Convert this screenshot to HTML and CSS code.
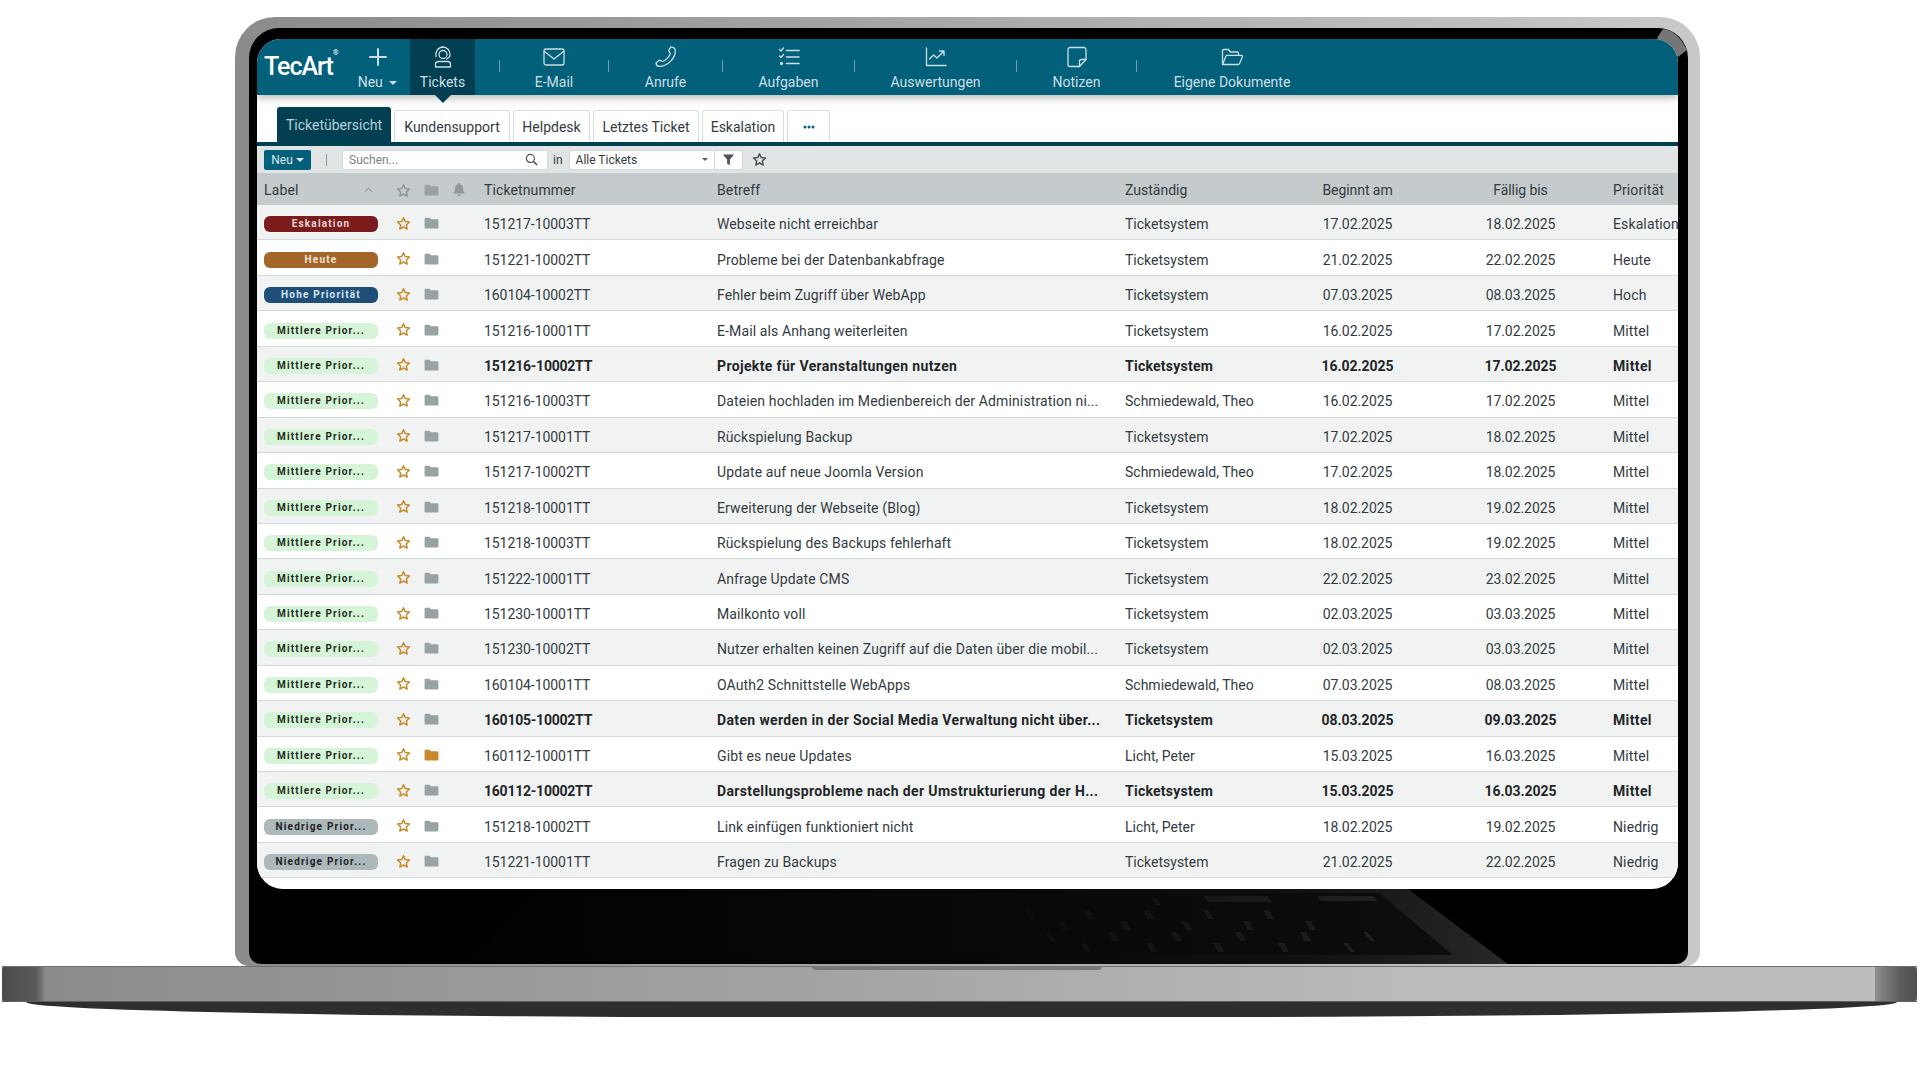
FILE: index.html
```html
<!DOCTYPE html>
<html lang="de">
<head>
  <meta charset="UTF-8">
  <title>TecArt Tickets</title>
  <link rel="stylesheet" href="styles.css">
</head>
<body>
  <!-- shared icons -->
  <svg class="defs" width="0" height="0">
    <symbol id="star" viewBox="0 0 24 24"><path d="M12 2.8l2.8 6.1 6.7.8-5 4.6 1.4 6.6-5.9-3.3-5.9 3.3 1.4-6.6-5-4.6 6.7-.8z" fill="none" stroke="currentColor" stroke-width="2.4" stroke-linejoin="round"/></symbol>
    <symbol id="folder" viewBox="0 0 16 13"><path d="M.5 2a1.2 1.2 0 0 1 1.2-1.2h4L7.500 2.500h6.800A1.200 1.200 0 0 1 15.500 3.700v7.600a1.200 1.200 0 0 1-1.200 1.200H1.700A1.200 1.200 0 0 1 .5 11.300z" fill="currentColor"/></symbol>
  </svg>

  <div class="lid">
    <div class="bezel">
      <svg class="hinge" width="40" height="32" viewBox="0 0 40 32"><path d="M15 1q14 1 24 21l-9 7-21-19z" fill="#767676"/></svg>

      <div class="screen">
        <!-- main navigation -->
        <nav class="nav">
          <div class="logo">TecArt<sup>®</sup></div>
          <div class="nav-item">
            <svg class="nav-icon" viewBox="0 0 22 22"><path d="M11 3v16M3 11h16" stroke-width="2"/></svg>
            <span>Neu <i class="caret"></i></span>
          </div>
          <div class="nav-item active">
            <svg class="nav-icon" viewBox="0 0 22 22"><circle cx="11" cy="8.500" r="4"/><path d="M4 10.500a7.500 7.500 0 0 1 7-9.500 7.200 7.200 0 0 1 7 7.500c0 1.200-.3 2.200-1 3l-2.500 1.500"/><path d="M3.500 21v-2.500a3 3 0 0 1 3-3h9a3 3 0 0 1 3 3V21z"/></svg>
            <span>Tickets</span>
          </div>
          <i class="nav-sep first"></i>
          <div class="nav-item">
            <svg class="nav-icon" viewBox="0 0 22 22"><rect x="1" y="3" width="20" height="16" rx="2"/><path d="M1.500 5.500l9.500 7.500 9.500-7.500"/></svg>
            <span>E-Mail</span>
          </div>
          <i class="nav-sep"></i>
          <div class="nav-item">
            <svg class="nav-icon" viewBox="0 0 22 22"><path d="M16 .8c1.900.2 3.900 1.400 4.200 3 .4 3.900-1.400 8.200-4.400 11.300-3.100 3.100-7.600 5.300-11.500 5.300-1.700 0-3-1.500-3.300-3.300l3.600-3 3 1.400c2.800-.9 6.800-4.700 7.700-8.200l-1.700-2.700z"/></svg>
            <span>Anrufe</span>
          </div>
          <i class="nav-sep"></i>
          <div class="nav-item">
            <svg class="nav-icon" viewBox="0 0 22 22"><path d="M8.500 4.500H21M8.500 11H21M8.500 17.500H21" stroke-width="1.600"/><path d="M1.500 3.500l1.500 1.500 2.500-3M1.500 10l1.500 1.500 2.500-3"/><circle cx="3.500" cy="17.500" r="1" fill="currentColor"/></svg>
            <span>Aufgaben</span>
          </div>
          <i class="nav-sep"></i>
          <div class="nav-item">
            <svg class="nav-icon" viewBox="0 0 22 22"><path d="M1.500 2v17.500h19.500"/><path d="M4.500 13l4-4 3.500 3 6.500-6.500M14.500 5h4.500v4.500"/></svg>
            <span>Auswertungen</span>
          </div>
          <i class="nav-sep"></i>
          <div class="nav-item">
            <svg class="nav-icon" viewBox="0 0 22 22"><path d="M20 13.500V3.500a2 2 0 0 0-2-2H4a2 2 0 0 0-2 2v15a2 2 0 0 0 2 2h9.500z"/><path d="M13.500 20.500v-5a2 2 0 0 1 2-2H20"/></svg>
            <span>Notizen</span>
          </div>
          <i class="nav-sep"></i>
          <div class="nav-item">
            <svg class="nav-icon" viewBox="0 0 22 22"><path d="M1.500 18V5a1.500 1.500 0 0 1 1.500-1.500h4.500l2 2.500h6.500a1.500 1.500 0 0 1 1.500 1.500v1.500"/><path d="M1.500 18.500l3.500-8.500a1 1 0 0 1 1-.7h14.500a1 1 0 0 1 1 1.300l-3 7a1.500 1.500 0 0 1-1.400.9z"/></svg>
            <span>Eigene Dokumente</span>
          </div>
        </nav>

        <!-- sub tabs -->
        <div class="tabs">
          <div class="tab active">Ticketübersicht</div>
          <div class="tab">Kundensupport</div>
          <div class="tab">Helpdesk</div>
          <div class="tab">Letztes Ticket</div>
          <div class="tab">Eskalation</div>
          <div class="tab more"><svg class="dots" viewBox="0 0 12 4"><circle cx="2" cy="2" r="1.500"/><circle cx="6" cy="2" r="1.500"/><circle cx="10" cy="2" r="1.500"/></svg></div>
        </div>

        <!-- toolbar -->
        <div class="toolbar">
          <div class="btn-new">Neu <i class="caret"></i></div>
          <i class="tool-sep"></i>
          <div class="search">
            <span>Suchen...</span>
            <svg class="tool-icon" viewBox="0 0 14 14"><circle cx="5.800" cy="5.800" r="4.300" fill="none" stroke="currentColor" stroke-width="1.300"/><path d="M9 9l4 4" stroke="currentColor" stroke-width="1.600"/></svg>
          </div>
          <span class="in">in</span>
          <div class="select">
            <span class="select-text">Alle Tickets</span>
            <i class="caret dark"></i>
            <div class="select-filter">
              <svg class="tool-icon" viewBox="0 0 14 14"><path d="M1 1.500h12L8.500 7v6l-3-1.500V7z" fill="currentColor"/></svg>
            </div>
          </div>
          <svg class="tool-star"><use href="#star"/></svg>
        </div>

        <!-- ticket list -->
        <div class="table">
          <div class="row head">
            <div class="head-label"><span>Label</span><svg class="sort" viewBox="0 0 10 6"><path d="M1 5l4-4 4 4" fill="none" stroke="currentColor" stroke-width="1.200"/></svg></div>
            <svg class="star muted"><use href="#star"/></svg>
            <div class="head-icons">
              <svg class="folder"><use href="#folder"/></svg>
              <svg class="bell" viewBox="0 0 12 14"><path d="M6 0a1 1 0 0 1 1 1.200C9 1.800 10 3.500 10 5.500c0 2.500.6 3.700 2 5H0c1.400-1.300 2-2.500 2-5 0-2 1-3.700 3-4.300A1 1 0 0 1 6 0zM4.200 11.500h3.600a1.800 1.800 0 0 1-3.600 0z" fill="currentColor"/></svg>
            </div>
            <div>Ticketnummer</div>
            <div>Betreff</div>
            <div>Zuständig</div>
            <div class="date">Beginnt am</div>
            <div class="date">Fällig bis</div>
            <div>Priorität</div>
          </div>

          <div class="row"><div class="label red">Eskalation</div><svg class="star"><use href="#star"/></svg><svg class="folder"><use href="#folder"/></svg><div>151217-10003TT</div><div>Webseite nicht erreichbar</div><div>Ticketsystem</div><div class="date">17.02.2025</div><div class="date">18.02.2025</div><div>Eskalation</div></div>
          <div class="row"><div class="label orange">Heute</div><svg class="star"><use href="#star"/></svg><svg class="folder"><use href="#folder"/></svg><div>151221-10002TT</div><div>Probleme bei der Datenbankabfrage</div><div>Ticketsystem</div><div class="date">21.02.2025</div><div class="date">22.02.2025</div><div>Heute</div></div>
          <div class="row"><div class="label blue">Hohe Priorität</div><svg class="star"><use href="#star"/></svg><svg class="folder"><use href="#folder"/></svg><div>160104-10002TT</div><div>Fehler beim Zugriff über WebApp</div><div>Ticketsystem</div><div class="date">07.03.2025</div><div class="date">08.03.2025</div><div>Hoch</div></div>
          <div class="row"><div class="label green">Mittlere Prior...</div><svg class="star"><use href="#star"/></svg><svg class="folder"><use href="#folder"/></svg><div>151216-10001TT</div><div>E-Mail als Anhang weiterleiten</div><div>Ticketsystem</div><div class="date">16.02.2025</div><div class="date">17.02.2025</div><div>Mittel</div></div>
          <div class="row unread"><div class="label green">Mittlere Prior...</div><svg class="star"><use href="#star"/></svg><svg class="folder"><use href="#folder"/></svg><div>151216-10002TT</div><div>Projekte für Veranstaltungen nutzen</div><div>Ticketsystem</div><div class="date">16.02.2025</div><div class="date">17.02.2025</div><div>Mittel</div></div>
          <div class="row"><div class="label green">Mittlere Prior...</div><svg class="star"><use href="#star"/></svg><svg class="folder"><use href="#folder"/></svg><div>151216-10003TT</div><div>Dateien hochladen im Medienbereich der Administration ni...</div><div>Schmiedewald, Theo</div><div class="date">16.02.2025</div><div class="date">17.02.2025</div><div>Mittel</div></div>
          <div class="row"><div class="label green">Mittlere Prior...</div><svg class="star"><use href="#star"/></svg><svg class="folder"><use href="#folder"/></svg><div>151217-10001TT</div><div>Rückspielung Backup</div><div>Ticketsystem</div><div class="date">17.02.2025</div><div class="date">18.02.2025</div><div>Mittel</div></div>
          <div class="row"><div class="label green">Mittlere Prior...</div><svg class="star"><use href="#star"/></svg><svg class="folder"><use href="#folder"/></svg><div>151217-10002TT</div><div>Update auf neue Joomla Version</div><div>Schmiedewald, Theo</div><div class="date">17.02.2025</div><div class="date">18.02.2025</div><div>Mittel</div></div>
          <div class="row"><div class="label green">Mittlere Prior...</div><svg class="star"><use href="#star"/></svg><svg class="folder"><use href="#folder"/></svg><div>151218-10001TT</div><div>Erweiterung der Webseite (Blog)</div><div>Ticketsystem</div><div class="date">18.02.2025</div><div class="date">19.02.2025</div><div>Mittel</div></div>
          <div class="row"><div class="label green">Mittlere Prior...</div><svg class="star"><use href="#star"/></svg><svg class="folder"><use href="#folder"/></svg><div>151218-10003TT</div><div>Rückspielung des Backups fehlerhaft</div><div>Ticketsystem</div><div class="date">18.02.2025</div><div class="date">19.02.2025</div><div>Mittel</div></div>
          <div class="row"><div class="label green">Mittlere Prior...</div><svg class="star"><use href="#star"/></svg><svg class="folder"><use href="#folder"/></svg><div>151222-10001TT</div><div>Anfrage Update CMS</div><div>Ticketsystem</div><div class="date">22.02.2025</div><div class="date">23.02.2025</div><div>Mittel</div></div>
          <div class="row"><div class="label green">Mittlere Prior...</div><svg class="star"><use href="#star"/></svg><svg class="folder"><use href="#folder"/></svg><div>151230-10001TT</div><div>Mailkonto voll</div><div>Ticketsystem</div><div class="date">02.03.2025</div><div class="date">03.03.2025</div><div>Mittel</div></div>
          <div class="row"><div class="label green">Mittlere Prior...</div><svg class="star"><use href="#star"/></svg><svg class="folder"><use href="#folder"/></svg><div>151230-10002TT</div><div>Nutzer erhalten keinen Zugriff auf die Daten über die mobil...</div><div>Ticketsystem</div><div class="date">02.03.2025</div><div class="date">03.03.2025</div><div>Mittel</div></div>
          <div class="row"><div class="label green">Mittlere Prior...</div><svg class="star"><use href="#star"/></svg><svg class="folder"><use href="#folder"/></svg><div>160104-10001TT</div><div>OAuth2 Schnittstelle WebApps</div><div>Schmiedewald, Theo</div><div class="date">07.03.2025</div><div class="date">08.03.2025</div><div>Mittel</div></div>
          <div class="row unread"><div class="label green">Mittlere Prior...</div><svg class="star"><use href="#star"/></svg><svg class="folder"><use href="#folder"/></svg><div>160105-10002TT</div><div>Daten werden in der Social Media Verwaltung nicht über...</div><div>Ticketsystem</div><div class="date">08.03.2025</div><div class="date">09.03.2025</div><div>Mittel</div></div>
          <div class="row"><div class="label green">Mittlere Prior...</div><svg class="star"><use href="#star"/></svg><svg class="folder gold"><use href="#folder"/></svg><div>160112-10001TT</div><div>Gibt es neue Updates</div><div>Licht, Peter</div><div class="date">15.03.2025</div><div class="date">16.03.2025</div><div>Mittel</div></div>
          <div class="row unread"><div class="label green">Mittlere Prior...</div><svg class="star"><use href="#star"/></svg><svg class="folder"><use href="#folder"/></svg><div>160112-10002TT</div><div>Darstellungsprobleme nach der Umstrukturierung der H...</div><div>Ticketsystem</div><div class="date">15.03.2025</div><div class="date">16.03.2025</div><div>Mittel</div></div>
          <div class="row"><div class="label grey">Niedrige Prior...</div><svg class="star"><use href="#star"/></svg><svg class="folder"><use href="#folder"/></svg><div>151218-10002TT</div><div>Link einfügen funktioniert nicht</div><div>Licht, Peter</div><div class="date">18.02.2025</div><div class="date">19.02.2025</div><div>Niedrig</div></div>
          <div class="row"><div class="label grey">Niedrige Prior...</div><svg class="star"><use href="#star"/></svg><svg class="folder"><use href="#folder"/></svg><div>151221-10001TT</div><div>Fragen zu Backups</div><div>Ticketsystem</div><div class="date">21.02.2025</div><div class="date">22.02.2025</div><div>Niedrig</div></div>
        </div>
      </div>

      <!-- reflection of the keyboard -->
      <svg class="keyboard" width="1421" height="75" viewBox="0 0 1421 75">
        <defs>
          <linearGradient id="deck" x1="0" x2="1" y1="0" y2="0">
            <stop offset="0" stop-color="#020202"/>
            <stop offset="0.5" stop-color="#070707"/>
            <stop offset="0.8" stop-color="#101010"/>
            <stop offset="1" stop-color="#282828"/>
          </linearGradient>
          <linearGradient id="well" x1="0" x2="1" y1="0" y2="0">
            <stop offset="0" stop-color="#020202"/>
            <stop offset="0.6" stop-color="#090909"/>
            <stop offset="1" stop-color="#0d0d0d"/>
          </linearGradient>
          <linearGradient id="keys" gradientUnits="userSpaceOnUse" x1="760" x2="1120" y1="0" y2="0">
            <stop offset="0" stop-color="#0c0c0c"/>
            <stop offset="1" stop-color="#202020"/>
          </linearGradient>
        </defs>
        <path d="M283 0H1151L1251 75H206z" fill="url(#deck)"/>
        <path d="M283 4H1122L1196 66H215z" fill="url(#well)"/>
        <path d="M886 21l6 0 5 9-6 0zM946 21l6 0 5 9-6 0zM1006 21l6 0 5 9-6 0zM768 21l5 0 5 9-5 0zM826 21l6 0 5 9-6 0zM863 32l6 0 5 9-6 0zM924 32l6 0 5 9-6 0zM986 32l6 0 5 9-6 0zM1048 32l6 0 5 9-6 0zM801 32l5 0 5 9-5 0zM914 43l6 0 5 9-6 0zM978 43l6 0 5 9-6 0zM1043 43l6 0 5 9-6 0zM1106 43l4 0 8 9-4 0zM788 43l5 0 5 9-5 0zM851 43l6 0 5 9-6 0zM889 54l6 0 5 9-6 0zM956 54l6 0 5 9-6 0zM1021 54l6 0 5 9-6 0zM1086 54l4 0 8 9-4 0zM824 54l5 0 5 9-5 0zM894 9l5 0 5 7-5 0zM946 7h60l5 6h-60zM1005 7l5 0 6 7-5 0zM1060 7h56l4 5h-56z" fill="url(#keys)"/>
      </svg>
    </div>
  </div>

  <!-- laptop base -->
  <div class="base">
    <div class="base-top">
      <i class="base-cap"></i>
      <i class="base-notch"></i>
      <i class="base-cap right"></i>
    </div>
    <div class="base-under"></div>
  </div>
</body>
</html>
```

FILE: styles.css
```css
* {
  box-sizing: border-box;
}

body {
  margin: 0;
  padding-top: 17px;
  height: 1080px;
  overflow: hidden;
  background: #ffffff;
  font-family: Roboto, "Noto Sans", sans-serif;
  font-size: 14px;
  color: #333b3f;
}

i {
  font-style: normal;
}

.defs {
  position: absolute;
}

/* Laptop */
.lid {
  width: 1465px;
  margin-left: 235px;
  padding: 11px 12px 2px 14px;
  border-radius: 40px 40px 14px 14px;
  background: linear-gradient(90deg, #8b8b8b 0%, #a9a9a9 50%, #c9c9c9 100%);
}

.bezel {
  position: relative;
  padding: 11px 10px 0 8px;
  border-radius: 30px 30px 12px 12px;
  background: #000000;
}

.hinge {
  position: absolute;
  top: 0;
  right: 0;
}

.keyboard {
  display: block;
}

.screen {
  position: relative;
  width: 1421px;
  height: 850px;
  overflow: hidden;
  border-radius: 24px 24px 26px 26px;
  background: #ffffff;
}

.base {
  width: 1915px;
  margin-left: 2px;
}

.base-top {
  position: relative;
  display: flex;
  justify-content: space-between;
  height: 36px;
  border-top: 1px solid #6f6f6f;
  border-bottom: 1px solid #5e5e5e;
  background: linear-gradient(90deg, #8a8a8a 0%, #a5a5a5 45%, #bcbcbc 75%, #bcbcbc 100%);
}

.base-cap {
  width: 42px;
  border-radius: 3px 0 0 3px;
  background: linear-gradient(90deg, #4a4a4a, #5a5a5a 80%, #808080);
}

.base-cap.right {
  border-radius: 0 3px 3px 0;
  background: linear-gradient(90deg, #8f8f8f, #5c5c5c 60%, #4f4f4f);
}

.base-notch {
  position: absolute;
  top: -1px;
  left: 810px;
  width: 290px;
  height: 4px;
  border-radius: 0 0 5px 5px;
  background: #787878;
}

.base-under {
  height: 15px;
  margin: 0 20px 0 24px;
  border-radius: 0 0 700px 700px / 0 0 15px 15px;
  background: #2e2e2e;
}

/* Navigation */
.nav {
  position: relative;
  z-index: 2;
  display: grid;
  grid-template-columns: 88px 65px 65px 24px 1px 108px 1px 113px 1px 131px 1px 161px 1px 119px 1px 190px;
  height: 56px;
  background: #03607b;
  box-shadow: 0 3px 8px rgba(0, 0, 0, 0.28);
  color: #cbdfe5;
}

.logo {
  padding: 13px 0 0 7px;
  font-size: 25px;
  font-weight: 500;
  letter-spacing: -1px;
  color: #ffffff;
}

.logo sup {
  position: relative;
  top: -3px;
  font-size: 7px;
  letter-spacing: 0;
  vertical-align: top;
}

.nav-item {
  position: relative;
  display: flex;
  flex-direction: column;
  align-items: center;
  padding-top: 7px;
  font-size: 14px;
  line-height: 18px;
}

.nav-item span {
  margin-top: 5px;
  white-space: nowrap;
}

.nav-item.active {
  background: #023f53;
}

.nav-item.active::after {
  content: "";
  position: absolute;
  bottom: -8px;
  left: 50%;
  margin-left: -8px;
  border-top: 8px solid #023f53;
  border-left: 8px solid transparent;
  border-right: 8px solid transparent;
}

.nav-icon {
  width: 22px;
  height: 22px;
  fill: none;
  stroke: currentColor;
  stroke-width: 1.300;
  stroke-linejoin: round;
  stroke-linecap: round;
}

.nav-sep {
  align-self: center;
  height: 12px;
  margin-top: -3px;
  background: #6c9fb0;
}

.nav-sep.first {
  grid-column: 5;
}

.caret {
  display: inline-block;
  margin-left: 3px;
  vertical-align: middle;
  border-top: 4px solid currentColor;
  border-left: 4px solid transparent;
  border-right: 4px solid transparent;
}

/* Tabs */
.tabs {
  display: grid;
  grid-template-columns: 114px 116px 77px 106px 82px 43px;
  gap: 3px;
  align-items: end;
  height: 47px;
  padding-left: 20px;
}

.tab {
  display: flex;
  align-items: center;
  justify-content: center;
  height: 32px;
  border: 1px solid #d9dddf;
  border-bottom: none;
  border-radius: 3px 3px 0 0;
  font-size: 14px;
  white-space: nowrap;
}

.tab.active {
  height: 35px;
  border: none;
  background: #023f53;
  color: #b6d0d8;
}

.dots {
  width: 12px;
  height: 4px;
  fill: #03607b;
}

/* Toolbar */
.toolbar {
  display: flex;
  align-items: center;
  height: 31px;
  padding-left: 7px;
  border-top: 4px solid #023f53;
  background: #e0e4e5;
  font-size: 12px;
}

.btn-new {
  display: flex;
  align-items: center;
  justify-content: center;
  width: 47px;
  height: 20px;
  border-radius: 2px;
  background: #03607b;
  color: #d9e8ec;
}

.tool-sep {
  width: 1px;
  height: 12px;
  margin-left: 15px;
  background: #8d9699;
}

.search {
  display: flex;
  align-items: center;
  justify-content: space-between;
  width: 206px;
  height: 20px;
  margin-left: 15px;
  padding: 0 9px 0 6px;
  border: 1px solid #d5d9db;
  border-radius: 2px;
  background: #ffffff;
  color: #7b8487;
}

.tool-icon {
  width: 13px;
  height: 13px;
  color: #4c5558;
}

.in {
  margin-left: 5px;
}

.select {
  display: flex;
  align-items: center;
  width: 174px;
  height: 20px;
  margin-left: 6px;
  padding-left: 6px;
  border: 1px solid #d5d9db;
  border-radius: 2px;
  background: #ffffff;
}

.select-text {
  flex: 1;
}

.caret.dark {
  margin: 0 6px 0 0;
  border-top-width: 3px;
  border-left-width: 3px;
  border-right-width: 3px;
  color: #555d60;
}

.select-filter {
  display: flex;
  align-items: center;
  justify-content: center;
  width: 28px;
  height: 18px;
  border-left: 1px solid #d5d9db;
}

.tool-star {
  width: 15px;
  height: 15px;
  margin-left: 9px;
  color: #4c5558;
}

/* Table */
.row {
  display: grid;
  grid-template-columns: 132px 28px 60px 233px 408px 167px 131px 190px 80px;
  align-items: center;
  height: 35.450px;
  padding: 4px 0 0 7px;
  border-bottom: 1px solid #d5d9dc;
  letter-spacing: 0.12px;
  white-space: nowrap;
}

.row:nth-child(even) {
  background: #f1f3f3;
}

.row.head {
  height: 32px;
  padding-top: 2px;
  border-bottom: none;
  background: #c5cacc;
}

.row.unread {
  font-weight: 700;
  letter-spacing: 0.36px;
  color: #1f2628;
}

.row > :nth-child(4),
.row .date {
  letter-spacing: -0.06px;
}

.row > :nth-child(6) {
  letter-spacing: 0;
}

.row.unread > :nth-child(4) {
  letter-spacing: -0.23px;
}

.row.unread > :nth-child(6) {
  letter-spacing: 0.25px;
}

.head > :nth-child(4) {
  letter-spacing: 0.12px;
}

.head-label {
  display: flex;
  align-items: center;
  justify-content: space-between;
  padding-right: 23px;
}

.head-icons {
  display: flex;
  align-items: center;
  gap: 14px;
}

.sort {
  width: 9px;
  height: 6px;
  color: #8f989b;
}

.bell {
  width: 12px;
  height: 14px;
  color: #8f989b;
}

.date {
  text-align: center;
}

.date + .date {
  padding-left: 5px;
}

.label {
  width: 114px;
  height: 16px;
  overflow: hidden;
  border-radius: 6px;
  font-size: 10px;
  font-weight: 700;
  line-height: 16px;
  text-align: center;
}

.row .label,
.row.unread .label {
  letter-spacing: 1.200px;
}

.label.red {
  background: #7a1c1c;
  color: #e8d6d6;
}

.label.orange {
  background: #a4652a;
  color: #f3e6d8;
}

.label.blue {
  background: #1f4f78;
  color: #d8e6f0;
}

.label.green {
  background: #d6f5d8;
  color: #1d2a20;
}

.label.grey {
  background: #adb8bb;
  color: #1d2224;
}

.star {
  width: 15px;
  height: 15px;
  margin-top: -2px;
  color: #c78a2b;
}

.star.muted {
  margin-top: 0;
  color: #8f989b;
}

.folder {
  width: 15px;
  height: 12px;
  margin-top: -2px;
  color: #98a2a5;
}

.head .folder {
  margin-top: 0;
}

.folder.gold {
  color: #c78a2b;
}
```
